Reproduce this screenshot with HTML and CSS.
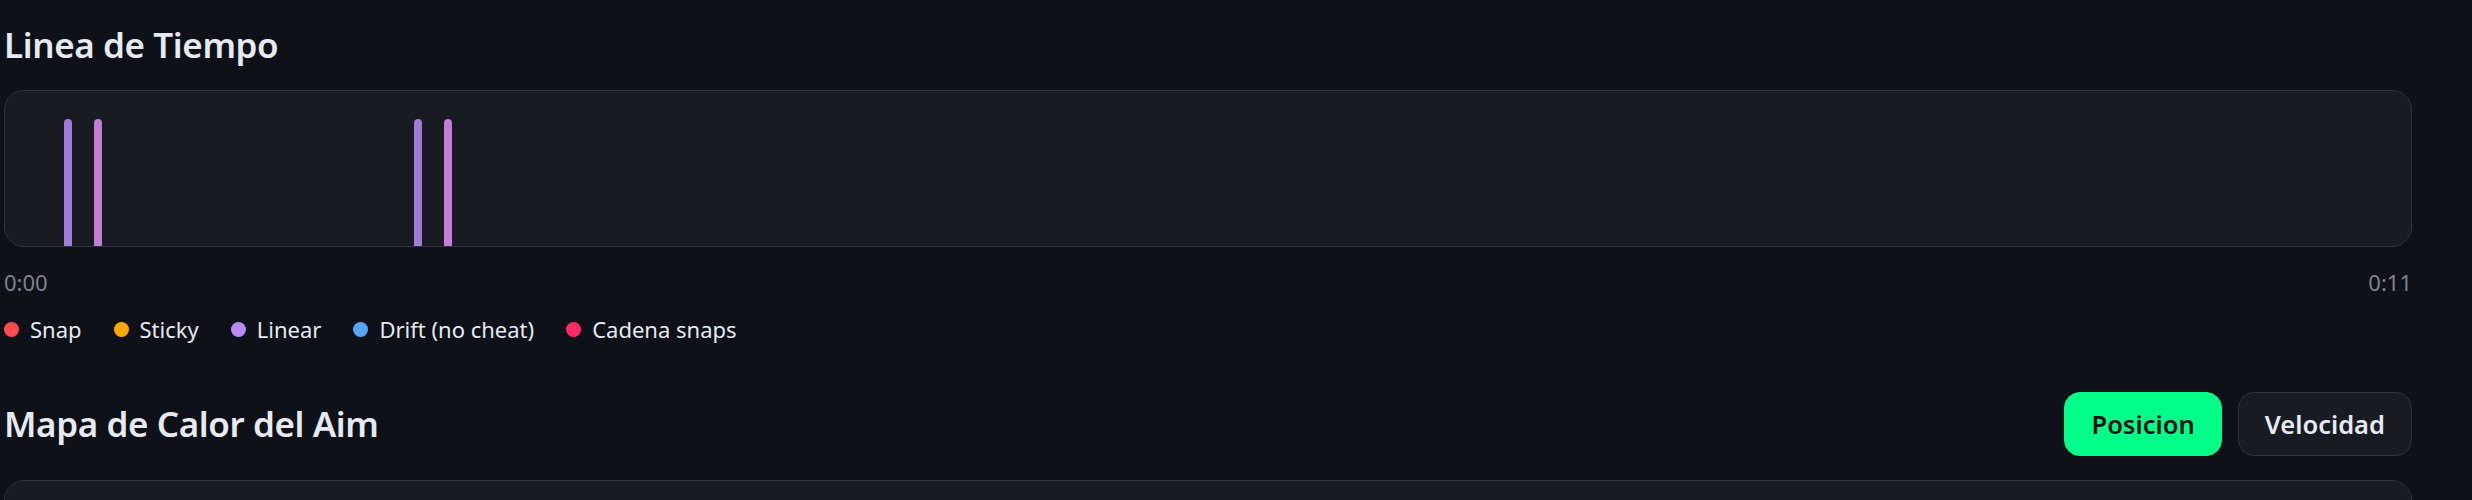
FILE: index.html
```html
<!DOCTYPE html>
<html>
<head>
  <title>Analisis del Aim</title>
  <link rel="stylesheet" href="styles.css">
</head>
<body>
  <div class="page">
    <h2 class="section-title">Linea de Tiempo</h2>
    <div class="timeline">
      <div class="tick linear" style="left: 2.45%;"></div>
      <div class="tick linear-alt" style="left: 3.70%;"></div>
      <div class="tick linear" style="left: 17.0%;"></div>
      <div class="tick linear-alt" style="left: 18.25%;"></div>
    </div>
    <div class="time-row">
      <span>0:00</span>
      <span>0:11</span>
    </div>
    <div class="legend">
      <span class="legend-item"><span class="dot snap"></span>Snap</span>
      <span class="legend-item"><span class="dot sticky"></span>Sticky</span>
      <span class="legend-item"><span class="dot lin"></span>Linear</span>
      <span class="legend-item"><span class="dot drift"></span>Drift (no cheat)</span>
      <span class="legend-item"><span class="dot chain"></span>Cadena snaps</span>
    </div>

    <div class="heat-header">
      <h2 class="section-title">Mapa de Calor del Aim</h2>
      <div class="toggle">
        <button class="btn active">Posicion</button>
        <button class="btn">Velocidad</button>
      </div>
    </div>
    <div class="heatmap"></div>
  </div>
</body>
</html>
```

FILE: styles.css
```css
body {
  margin: 0;
  padding: 0;
  background-color: #0e1118;
  color: #e6eaf2;
  font-family: "Noto Sans", "Open Sans", sans-serif;
  overflow: hidden;
}

.page {
  width: 2408px;
  padding: 22px 0 0 4px;
}

.section-title {
  margin: 0;
  font-size: 35px;
  line-height: 46px;
  font-weight: 600;
  letter-spacing: -0.4px;
  color: #e6eaf2;
}

.timeline {
  position: relative;
  margin-top: 22px;
  height: 155px;
  background-color: #181b22;
  border: 1px solid #30343c;
  border-radius: 20px;
}

/* events on the time axis */
.tick {
  position: absolute;
  top: 28px;
  bottom: 0;
  width: 8px;
  border-radius: 4px 4px 0 0;
}
.tick.linear {
  background-color: #a27ad7;
}
.tick.linear-alt {
  background-color: #c47cd9;
}

.time-row {
  display: flex;
  justify-content: space-between;
  margin-top: 20px;
  font-size: 22px;
  line-height: 30px;
  color: #7d828c;
}

.legend {
  display: flex;
  gap: 32px;
  margin-top: 17px;
  font-size: 22px;
  line-height: 31px;
}
.legend-item {
  display: flex;
  align-items: center;
  gap: 11px;
}
.dot {
  width: 15px;
  height: 15px;
  border-radius: 50%;
}
.dot.snap { background-color: #ff4a4f; }
.dot.sticky { background-color: #ffaa00; }
.dot.lin { background-color: #b98af7; }
.dot.drift { background-color: #55a5ff; }
.dot.chain { background-color: #ff2a68; }

.heat-header {
  display: flex;
  justify-content: space-between;
  align-items: center;
  margin-top: 47px;
}
.toggle {
  display: flex;
  gap: 16px;
}
.btn {
  height: 64px;
  padding: 0 26px;
  font-family: inherit;
  font-size: 25.5px;
  font-weight: 600;
  color: #e6eaf2;
  background-color: #181b22;
  border: 1.5px solid #30343c;
  border-radius: 16px;
  cursor: pointer;
}
.btn.active {
  background-color: #00ff88;
  border-color: #00ff88;
  color: #0e1118;
}

.heatmap {
  margin-top: 24px;
  height: 300px;
  background-color: #181b22;
  border: 1px solid #30343c;
  border-radius: 20px;
}
```
